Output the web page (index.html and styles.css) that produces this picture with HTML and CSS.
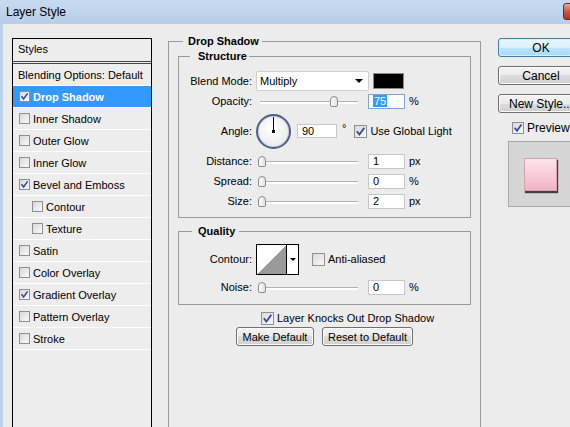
FILE: index.html
```html
<!DOCTYPE html>
<html lang="en">
<head>
    <meta charset="UTF-8">
    <title>Layer Style</title>
    <link rel="stylesheet" href="styles.css">
</head>
<body>
<div class="window">
    <div class="titlebar">
        <span class="title">Layer Style</span>
        <span class="close"></span>
    </div>

    <div class="client">
        <div class="styles-panel">
            <div class="styles-head">Styles</div>
            <ul class="styles-list">
                <li class="plain">Blending Options: Default</li>
                <li class="selected"><span class="cb on"><svg viewBox="0 0 9 9"><path d="M1.5 4.3 L3.6 7 L7.6 1.4"/></svg></span>Drop Shadow</li>
                <li><span class="cb"></span>Inner Shadow</li>
                <li><span class="cb"></span>Outer Glow</li>
                <li><span class="cb"></span>Inner Glow</li>
                <li><span class="cb on"><svg viewBox="0 0 9 9"><path d="M1.5 4.3 L3.6 7 L7.6 1.4"/></svg></span>Bevel and Emboss</li>
                <li class="sub-item"><span class="cb"></span>Contour</li>
                <li class="sub-item"><span class="cb"></span>Texture</li>
                <li><span class="cb"></span>Satin</li>
                <li><span class="cb"></span>Color Overlay</li>
                <li><span class="cb on"><svg viewBox="0 0 9 9"><path d="M1.5 4.3 L3.6 7 L7.6 1.4"/></svg></span>Gradient Overlay</li>
                <li><span class="cb"></span>Pattern Overlay</li>
                <li><span class="cb"></span>Stroke</li>
            </ul>
        </div>

        <fieldset class="group main">
            <legend>Drop Shadow</legend>

            <fieldset class="group sub structure">
                <legend>Structure</legend>
                <div class="row r-blend">
                    <span class="lbl">Blend Mode:</span>
                    <div class="select"><span>Multiply</span><span class="arrow"></span></div>
                    <span class="color"></span>
                </div>
                <div class="row r-slide">
                    <span class="lbl">Opacity:</span>
                    <div class="slider"><span class="thumb" style="left: 70px"></span></div>
                    <div class="num focus"><span class="sel">75</span></div>
                    <span class="unit">%</span>
                </div>
                <div class="row r-angle">
                    <span class="lbl">Angle:</span>
                    <div class="dial"></div>
                    <div class="num wide">90</div>
                    <span class="deg">°</span>
                    <span class="cb lg on"><svg viewBox="0 0 9 9"><path d="M1.5 4.3 L3.6 7 L7.6 1.4"/></svg></span>
                    <span>Use Global Light</span>
                </div>
                <div class="row r-slide">
                    <span class="lbl">Distance:</span>
                    <div class="slider"><span class="thumb" style="left: -2px"></span></div>
                    <div class="num">1</div>
                    <span class="unit">px</span>
                </div>
                <div class="row r-slide">
                    <span class="lbl">Spread:</span>
                    <div class="slider"><span class="thumb" style="left: -2px"></span></div>
                    <div class="num">0</div>
                    <span class="unit">%</span>
                </div>
                <div class="row r-slide">
                    <span class="lbl">Size:</span>
                    <div class="slider"><span class="thumb" style="left: -2px"></span></div>
                    <div class="num">2</div>
                    <span class="unit">px</span>
                </div>
            </fieldset>

            <fieldset class="group sub quality">
                <legend>Quality</legend>
                <div class="row r-contour">
                    <span class="lbl">Contour:</span>
                    <div class="contour">
                        <span class="contour-curve"></span>
                        <span class="contour-drop"><span class="arrow small"></span></span>
                    </div>
                    <span class="cb lg aa"></span>
                    <span>Anti-aliased</span>
                </div>
                <div class="row r-noise">
                    <span class="lbl">Noise:</span>
                    <div class="slider"><span class="thumb" style="left: -2px"></span></div>
                    <div class="num">0</div>
                    <span class="unit">%</span>
                </div>
            </fieldset>

            <div class="row knock">
                <span class="cb lg on"><svg viewBox="0 0 9 9"><path d="M1.5 4.3 L3.6 7 L7.6 1.4"/></svg></span>
                <span>Layer Knocks Out Drop Shadow</span>
            </div>

            <div class="btns">
                <button class="btn make">Make Default</button>
                <button class="btn reset">Reset to Default</button>
            </div>
        </fieldset>

        <div class="side">
            <button class="btn big ok">OK</button>
            <button class="btn big">Cancel</button>
            <button class="btn big">New Style...</button>
            <div class="row preview-row">
                <span class="cb pv on"><svg viewBox="0 0 9 9"><path d="M1.5 4.3 L3.6 7 L7.6 1.4"/></svg></span>
                <span>Preview</span>
            </div>
            <div class="preview">
                <div class="preview-swatch"></div>
            </div>
        </div>
    </div>
</div>
</body>
</html>
```

FILE: styles.css
```css
* {
    box-sizing: border-box;
}
body {
    margin: 0;
    font-family: "Liberation Sans", Arial, sans-serif;
    font-size: 11px;
    color: #000;
    background: #ececec;
}
.window {
    width: 570px;
    height: 427px;
    overflow: hidden;
    background: #ececec;
}
.titlebar {
    height: 24px;
    background: linear-gradient(#c7daef, #b8cee8);
    display: flex;
    align-items: center;
    justify-content: space-between;
    padding-left: 6px;
}
.title {
    font-size: 12px;
}
.close {
    width: 45px;
    height: 17px;
    align-self: flex-start;
    margin-top: 3px;
    margin-right: -38px;
    background: linear-gradient(#e9a999, #d0543c 50%, #b83219);
    border: 1px solid #6b2a1e;
    border-radius: 3px;
}
.client {
    display: flex;
    align-items: flex-start;
    border-left: 3px solid #bdd3eb;
    padding-left: 9px;
    height: 403px;
}

/* styles list */
.styles-panel {
    width: 140px;
    height: 400px;
    margin-top: 14px;
    border: 1px solid #000;
    background: #ededed;
    flex-shrink: 0;
}
.styles-head {
    height: 25px;
    line-height: 21px;
    padding-left: 5px;
    border-bottom: 3px double #444;
}
.styles-list {
    list-style: none;
    margin: 0;
    padding: 0;
}
.styles-list li {
    height: 22px;
    border-bottom: 1px solid #fff;
    display: flex;
    align-items: center;
    padding-left: 6px;
}
.styles-list li.plain {
    padding-left: 5px;
}
.styles-list li.sub-item {
    padding-left: 19px;
}
.styles-list li.selected {
    background: #3399ff;
    color: #fff;
    font-weight: bold;
}

.cb {
    width: 11px;
    height: 11px;
    border: 1px solid #8e8f8f;
    background: linear-gradient(135deg, #d8d8d8, #fafafa);
    display: inline-flex;
    flex-shrink: 0;
    margin-right: 3px;
}
.cb svg {
    width: 100%;
    height: 100%;
}
.cb path {
    fill: none;
    stroke: #34479a;
    stroke-width: 1.5;
}
.cb.lg {
    width: 13px;
    height: 13px;
}

/* group boxes */
.group {
    border: 1px solid #9a9a9a;
    margin: 0;
    min-width: 0;
}
.group legend {
    font-weight: bold;
    line-height: 14px;
}
.main {
    width: 313px;
    height: 420px;
    margin: 10px 0 0 16px;
    padding: 1px 9px 0;
    flex-shrink: 0;
}
.main > legend {
    margin-left: 5px;
    padding: 0 3px 0 5px;
}
.sub {
    width: 100%;
    padding: 7px 0 6px;
}
.structure > legend {
    margin-left: 11px;
    padding: 0 2px 0 8px;
}
.quality {
    margin-top: 6px;
    padding-top: 5px;
}
.quality > legend {
    margin-left: 13px;
    padding: 0 4px 0 6px;
}

.row {
    display: flex;
    align-items: center;
}
.lbl {
    width: 73px;
    text-align: right;
    flex-shrink: 0;
}
.r-blend {
    height: 21px;
}
.r-slide {
    height: 20px;
}
.r-angle {
    height: 40px;
}
.r-contour {
    height: 32px;
}
.r-noise {
    height: 22px;
    margin-top: 1px;
}

.select {
    width: 113px;
    height: 20px;
    margin-left: 4px;
    background: #fff;
    border: 1px solid #cfcfcf;
    border-radius: 2px;
    display: flex;
    align-items: center;
    justify-content: space-between;
    padding: 0 5px 0 3px;
}
.arrow {
    border-left: 4px solid transparent;
    border-right: 4px solid transparent;
    border-top: 4px solid #000;
}
.arrow.small {
    border-left-width: 3px;
    border-right-width: 3px;
    border-top-width: 3px;
}
.color {
    width: 31px;
    height: 16px;
    margin-left: 4px;
    background: #000;
    border: 1px solid #8a8a8a;
}

.slider {
    position: relative;
    width: 98px;
    height: 11px;
    margin-left: 8px;
}
.slider::before {
    content: "";
    position: absolute;
    left: 0;
    right: 0;
    top: 5px;
    height: 2px;
    border-top: 1px solid #b2b2b2;
    background: #fff;
}
.thumb {
    position: absolute;
    top: 0;
    width: 8px;
    height: 11px;
    border: 1px solid #8a8a8a;
    border-radius: 4px 4px 2px 2px;
    background: linear-gradient(90deg, #fdfdfd, #e2e2e2);
}
.num {
    width: 37px;
    height: 15px;
    margin-left: 10px;
    background: #fff;
    border: 1px solid #c6c6c6;
    padding-left: 4px;
    display: flex;
    align-items: center;
}
.num.focus {
    border-color: #7fa4d2;
}
.num.wide {
    width: 40px;
    height: 14px;
    margin-left: 6px;
}
.sel {
    background: #3399ff;
    color: #fff;
    padding: 0 1px;
}
.unit {
    margin-left: 4px;
}

.dial {
    position: relative;
    width: 35px;
    height: 35px;
    margin-left: 4px;
    border-radius: 50%;
    border: 2px solid #4f5f83;
    background: radial-gradient(circle at 45% 40%, #ffffff, #e4e4e4);
    box-shadow: inset 0 0 0 1px #c9d0de;
}
.dial::before {
    content: "";
    position: absolute;
    left: 15px;
    top: 1px;
    width: 1px;
    height: 15px;
    background: #000;
}
.dial::after {
    content: "";
    position: absolute;
    left: 14px;
    top: 14px;
    width: 3px;
    height: 3px;
    background: #000;
}
.deg {
    align-self: flex-start;
    margin: 11px 8px 0 5px;
}

.contour {
    width: 43px;
    height: 31px;
    margin-left: 4px;
    border: 1px solid #000;
    background: #fff;
    display: flex;
}
.contour-curve {
    width: 30px;
    border-right: 1px solid #000;
    background: linear-gradient(to top left, #9a9a9a 50%, #fff 50%);
}
.contour-drop {
    flex: 1;
    display: flex;
    align-items: center;
    justify-content: center;
}
.cb.aa {
    margin-left: 13px;
}

.knock {
    height: 14px;
    margin: 6px 0 0 83px;
}

.btns {
    display: flex;
    justify-content: center;
    gap: 8px;
    margin-top: 2px;
}
.btn {
    height: 19px;
    padding: 0;
    font-family: inherit;
    font-size: 11px;
    color: #000;
    border: 1px solid #707070;
    border-radius: 3px;
    background: linear-gradient(#f3f3f3, #ebebeb 50%, #dddddd 50%, #cfcfcf);
    box-shadow: inset 0 0 0 1px #fcfcfc;
}
.btn.make {
    width: 78px;
}
.btn.reset {
    width: 91px;
}

/* right column */
.side {
    width: 86px;
    margin: 14px 0 0 17px;
    flex-shrink: 0;
    display: flex;
    flex-direction: column;
}
.btn.big {
    width: 86px;
    font-size: 12px;
    margin-bottom: 9px;
}
.btn.ok {
    border-color: #3c7fb1;
    background: linear-gradient(#eaf6fd, #d9f0fc 50%, #bee6fd 50%, #a7d9f5);
    box-shadow: inset 0 0 0 1px #d4f0fd;
}
.preview-row {
    height: 12px;
    padding-left: 14px;
    font-size: 12px;
}
.cb.pv {
    width: 12px;
    height: 12px;
}
.preview {
    width: 70px;
    height: 66px;
    margin: 7px 0 0 10px;
    background: #d6d6d6;
    border: 1px solid #a8a8a8;
}
.preview-swatch {
    width: 33px;
    height: 33px;
    margin: 16px 0 0 15px;
    background: linear-gradient(#fde4eb, #f2b3c4);
    border: 1px solid #d8a3b0;
    box-shadow: 1px 2px 1px rgba(0, 0, 0, 0.7);
}
```
